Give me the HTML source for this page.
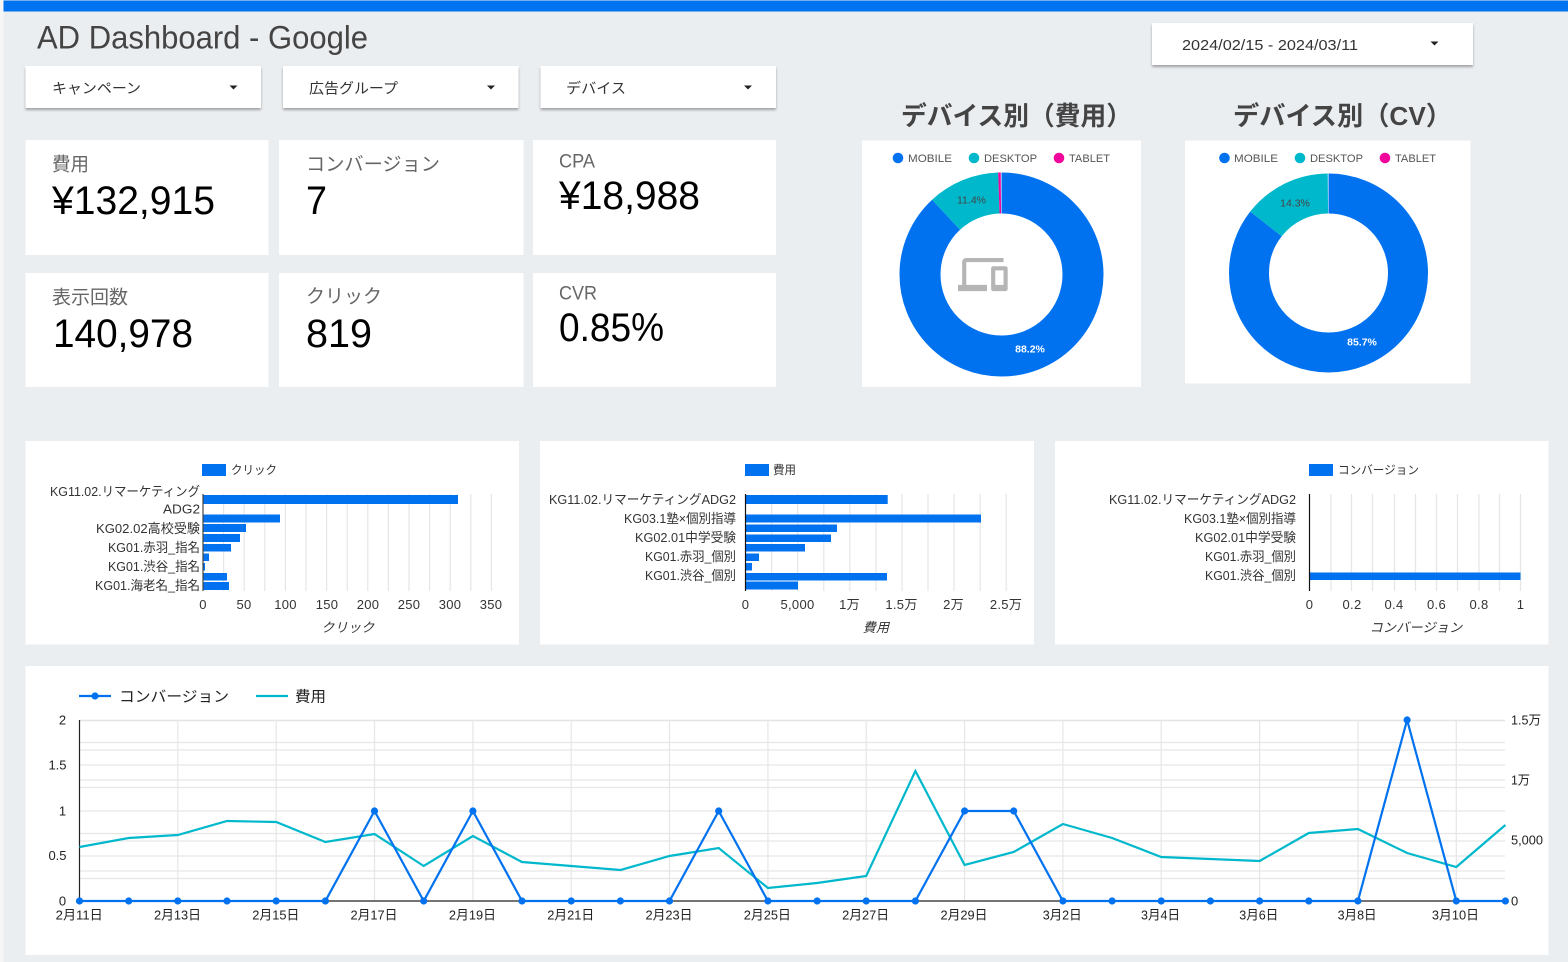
<!DOCTYPE html>
<html lang="ja"><head><meta charset="utf-8"><title>AD Dashboard - Google</title>
<style>
html,body{margin:0;padding:0;width:1568px;height:962px;overflow:hidden;background:#fff}
svg{display:block;position:absolute;left:0;top:0}
text{font-family:"Liberation Sans","Noto Sans CJK JP",sans-serif;dominant-baseline:central}
.a{font-size:13px;fill:#333;text-anchor:end}
.t{font-size:13px;fill:#333;text-anchor:middle;letter-spacing:.3px}
.l{font-size:13px;fill:#222;text-anchor:middle}
.k{font-size:19px;fill:#666}
.v{font-size:40px;fill:#000;dominant-baseline:auto}
.f{font-size:14.5px;fill:#333}
.g{font-size:11px;fill:#555}
.h{stroke:#e6e6e6;stroke-width:1.2;fill:none}
</style></head><body>
<svg width="1568" height="962" viewBox="0 0 1568 962" xmlns="http://www.w3.org/2000/svg">
<defs><filter id="s" x="-5%" y="-15%" width="110%" height="135%"><feDropShadow dx="0" dy="2" stdDeviation="1.4" flood-color="#000" flood-opacity=".32"/></filter></defs>
<rect width="1568" height="962" fill="#ebeef1"/>
<rect width="3.5" height="962" fill="#f6f6f6"/>
<rect x="3.5" y="0.5" width="1564.5" height="11" fill="#0073f0"/>
<text x="37" y="37.5" font-size="32" fill="#444" textLength="331" lengthAdjust="spacingAndGlyphs">AD Dashboard - Google</text>

<!-- filters -->
<g fill="#fff" filter="url(#s)"><rect x="25.5" y="66" width="235.5" height="42"/><rect x="283" y="66" width="235.5" height="42"/><rect x="540.5" y="66" width="235.5" height="42"/><rect x="1152" y="23" width="321" height="42"/></g>
<text class="f" x="52" y="89.5" textLength="89" lengthAdjust="spacingAndGlyphs">キャンペーン</text>
<text class="f" x="309" y="89.5" textLength="89" lengthAdjust="spacingAndGlyphs">広告グループ</text>
<text class="f" x="566" y="89.5" textLength="60" lengthAdjust="spacingAndGlyphs">デバイス</text>
<text class="f" x="1182" y="46" textLength="176" lengthAdjust="spacingAndGlyphs">2024/02/15 - 2024/03/11</text>
<g fill="#222"><path d="M229.5 85.5h8l-4 4z"/><path d="M487 85.5h8l-4 4z"/><path d="M744 85.5h8l-4 4z"/><path d="M1430.5 41.5h8l-4 4z"/></g>

<!-- KPI cards -->
<g fill="#fff"><rect x="25.5" y="140" width="243" height="115"/><rect x="279" y="140" width="244.5" height="115"/><rect x="533" y="140" width="243" height="115"/><rect x="25.5" y="273" width="243" height="114"/><rect x="279" y="273" width="244.5" height="114"/><rect x="533" y="273" width="243" height="114"/></g>
<text class="k" x="52" y="165" textLength="37" lengthAdjust="spacingAndGlyphs">費用</text>
<text class="k" x="306" y="165" textLength="134" lengthAdjust="spacingAndGlyphs">コンバージョン</text>
<text class="k" x="559" y="162" textLength="36" lengthAdjust="spacingAndGlyphs">CPA</text>
<text class="k" x="52" y="298" textLength="76" lengthAdjust="spacingAndGlyphs">表示回数</text>
<text class="k" x="306" y="297" textLength="76" lengthAdjust="spacingAndGlyphs">クリック</text>
<text class="k" x="559" y="294" textLength="38" lengthAdjust="spacingAndGlyphs">CVR</text>
<text class="v" x="52" y="214" textLength="163" lengthAdjust="spacingAndGlyphs">¥132,915</text>
<text class="v" x="306" y="214" textLength="21" lengthAdjust="spacingAndGlyphs">7</text>
<text class="v" x="559" y="209" textLength="141" lengthAdjust="spacingAndGlyphs">¥18,988</text>
<text class="v" x="53" y="347" textLength="140" lengthAdjust="spacingAndGlyphs">140,978</text>
<text class="v" x="306" y="347" textLength="66" lengthAdjust="spacingAndGlyphs">819</text>
<text class="v" x="559" y="341" textLength="105" lengthAdjust="spacingAndGlyphs">0.85%</text>

<!-- donuts -->
<text x="901" y="116" font-size="26" font-weight="700" fill="#444" textLength="231" lengthAdjust="spacingAndGlyphs">デバイス別（費用）</text>
<text x="1233" y="116" font-size="26" font-weight="700" fill="#444" textLength="219" lengthAdjust="spacingAndGlyphs">デバイス別（CV）</text>
<rect x="862" y="140.5" width="279" height="246.5" fill="#fff"/>
<rect x="1185" y="140.5" width="285.5" height="243" fill="#fff"/>
<g transform="rotate(-90 1001.5 274.5)" fill="none" stroke-width="41">
<circle cx="1001.5" cy="274.5" r="81.5" stroke="#0072f0" pathLength="100" stroke-dasharray="88.2 100"/>
<circle cx="1001.5" cy="274.5" r="81.5" stroke="#00b8cc" pathLength="100" stroke-dasharray="11.4 100" stroke-dashoffset="-88.2"/>
<circle cx="1001.5" cy="274.5" r="81.5" stroke="#f0069b" pathLength="100" stroke-dasharray="0.4 100" stroke-dashoffset="-99.6"/>
</g>
<g transform="rotate(-90 1328.5 273)" fill="none" stroke-width="40">
<circle cx="1328.5" cy="273" r="79.5" stroke="#0072f0" pathLength="100" stroke-dasharray="85.7 100"/>
<circle cx="1328.5" cy="273" r="79.5" stroke="#00b8cc" pathLength="100" stroke-dasharray="14.3 100" stroke-dashoffset="-85.7"/>
</g>
<path transform="translate(958 249.7) scale(2.07)" fill="#b5b5b5" d="M4 6h18V4H4c-1.1 0-2 .9-2 2v11H0v3h14v-3H4V6zm19 2h-6c-.55 0-1 .45-1 1v10c0 .55.45 1 1 1h6c.55 0 1-.45 1-1V9c0-.55-.45-1-1-1zm-1 9h-4v-7h4v7z"/>
<text x="971.5" y="200.5" fill="#444" font-size="10.5" text-anchor="middle">11.4%</text>
<text x="1030" y="349.5" fill="#fff" font-size="10.5" font-weight="700" text-anchor="middle">88.2%</text>
<text x="1295" y="203.5" fill="#444" font-size="10.5" text-anchor="middle">14.3%</text>
<text x="1362" y="342.5" fill="#fff" font-size="10.5" font-weight="700" text-anchor="middle">85.7%</text>
<circle cx="898" cy="158" r="5.3" fill="#0072f0"/><circle cx="974" cy="158" r="5.3" fill="#00b8cc"/><circle cx="1059" cy="158" r="5.3" fill="#f0069b"/>
<circle cx="1224.5" cy="158" r="5.3" fill="#0072f0"/><circle cx="1300" cy="158" r="5.3" fill="#00b8cc"/><circle cx="1385" cy="158" r="5.3" fill="#f0069b"/>
<text class="g" x="908" y="159" textLength="44" lengthAdjust="spacingAndGlyphs">MOBILE</text>
<text class="g" x="984" y="159" textLength="53" lengthAdjust="spacingAndGlyphs">DESKTOP</text>
<text class="g" x="1069" y="159" textLength="41" lengthAdjust="spacingAndGlyphs">TABLET</text>
<text class="g" x="1234" y="159" textLength="44" lengthAdjust="spacingAndGlyphs">MOBILE</text>
<text class="g" x="1310" y="159" textLength="53" lengthAdjust="spacingAndGlyphs">DESKTOP</text>
<text class="g" x="1395" y="159" textLength="41" lengthAdjust="spacingAndGlyphs">TABLET</text>

<!-- bar panels -->
<g fill="#fff"><rect x="25.5" y="441" width="493.5" height="203.5"/><rect x="540" y="441" width="494" height="203.5"/><rect x="1055" y="441" width="493.5" height="203.5"/></g>

<!-- chart 1 -->
<path class="h" d="M223.6 494V591M244.2 494V591M264.8 494V591M285.4 494V591M306 494V591M326.6 494V591M347.2 494V591M367.8 494V591M388.4 494V591M409 494V591M429.6 494V591M450.2 494V591M470.8 494V591M491.4 494V591"/>
<g fill="#0072f0"><rect x="203" y="495" width="255" height="9"/><rect x="203" y="514.5" width="77" height="8"/><rect x="203" y="524" width="43" height="8"/><rect x="203" y="534" width="37" height="8"/><rect x="203" y="544" width="28" height="7.5"/><rect x="203" y="553.5" width="6" height="7.5"/><rect x="203" y="563" width="2" height="7.5"/><rect x="203" y="573" width="24" height="7.5"/><rect x="203" y="582" width="26" height="8"/></g>
<path d="M203 494V591" stroke="#444" stroke-width="1.2"/>
<rect x="202" y="464" width="24" height="12" fill="#0072f0"/>
<text x="231" y="470" font-size="12" fill="#333" textLength="46" lengthAdjust="spacingAndGlyphs">クリック</text>
<text class="a" x="200" y="491.5" textLength="150" lengthAdjust="spacingAndGlyphs">KG11.02.リマーケティング</text>
<text class="a" x="200" y="509" textLength="37" lengthAdjust="spacingAndGlyphs">ADG2</text>
<text class="a" x="200" y="528.5" textLength="104" lengthAdjust="spacingAndGlyphs">KG02.02高校受験</text>
<text class="a" x="200" y="547.5" textLength="92" lengthAdjust="spacingAndGlyphs">KG01.赤羽_指名</text>
<text class="a" x="200" y="566.5" textLength="92" lengthAdjust="spacingAndGlyphs">KG01.渋谷_指名</text>
<text class="a" x="200" y="585.5" textLength="105" lengthAdjust="spacingAndGlyphs">KG01.海老名_指名</text>
<text class="t" x="203" y="604.5">0</text><text class="t" x="244" y="604.5">50</text><text class="t" x="285.5" y="604.5">100</text><text class="t" x="327" y="604.5">150</text><text class="t" x="368" y="604.5">200</text><text class="t" x="409" y="604.5">250</text><text class="t" x="450" y="604.5">300</text><text class="t" x="491" y="604.5">350</text>
<text class="t" x="348" y="627.5" font-style="italic">クリック</text>

<!-- chart 2 -->
<path class="h" d="M771.6 494V591M797.7 494V591M823.8 494V591M849.8 494V591M875.9 494V591M902 494V591M928 494V591M954.1 494V591M980.2 494V591M1006.2 494V591"/>
<g fill="#0072f0"><rect x="745.5" y="495" width="142.2" height="9"/><rect x="745.5" y="514.5" width="235.5" height="8"/><rect x="745.5" y="524.5" width="91.5" height="7.5"/><rect x="745.5" y="534.5" width="85.5" height="7.5"/><rect x="745.5" y="544" width="59.5" height="7.5"/><rect x="745.5" y="553.5" width="13.5" height="7.5"/><rect x="745.5" y="563" width="6.5" height="7.5"/><rect x="745.5" y="573" width="141.5" height="7.5"/><rect x="745.5" y="581.5" width="52.5" height="8"/></g>
<path d="M745.5 494V591" stroke="#111" stroke-width="1.2"/>
<rect x="745" y="464" width="24" height="12" fill="#0072f0"/>
<text x="773" y="470" font-size="12" fill="#333" textLength="23" lengthAdjust="spacingAndGlyphs">費用</text>
<text class="a" x="736" y="499.5" textLength="187" lengthAdjust="spacingAndGlyphs">KG11.02.リマーケティングADG2</text>
<text class="a" x="736" y="518.5" textLength="112" lengthAdjust="spacingAndGlyphs">KG03.1塾×個別指導</text>
<text class="a" x="736" y="537.5" textLength="101" lengthAdjust="spacingAndGlyphs">KG02.01中学受験</text>
<text class="a" x="736" y="556.5" textLength="91" lengthAdjust="spacingAndGlyphs">KG01.赤羽_個別</text>
<text class="a" x="736" y="575.5" textLength="91" lengthAdjust="spacingAndGlyphs">KG01.渋谷_個別</text>
<text class="t" x="745.5" y="604.5">0</text><text class="t" x="797.5" y="604.5">5,000</text><text class="t" x="849.5" y="604.5">1万</text><text class="t" x="901.5" y="604.5">1.5万</text><text class="t" x="953.5" y="604.5">2万</text><text class="t" x="1006" y="604.5">2.5万</text>
<text class="t" x="876" y="627.5" font-style="italic">費用</text>

<!-- chart 3 -->
<path class="h" d="M1331 494V591M1351.5 494V591M1372.5 494V591M1394.5 494V591M1415.5 494V591M1436.5 494V591M1457.5 494V591M1479 494V591M1499.5 494V591M1520.5 494V591"/>
<rect x="1309.5" y="572.5" width="211" height="7.5" fill="#0072f0"/>
<path d="M1309.5 494V591" stroke="#111" stroke-width="1.2"/>
<rect x="1309" y="464" width="24" height="12" fill="#0072f0"/>
<text x="1338" y="470" font-size="12" fill="#333" textLength="81" lengthAdjust="spacingAndGlyphs">コンバージョン</text>
<text class="a" x="1296" y="499.5" textLength="187" lengthAdjust="spacingAndGlyphs">KG11.02.リマーケティングADG2</text>
<text class="a" x="1296" y="518.5" textLength="112" lengthAdjust="spacingAndGlyphs">KG03.1塾×個別指導</text>
<text class="a" x="1296" y="537.5" textLength="101" lengthAdjust="spacingAndGlyphs">KG02.01中学受験</text>
<text class="a" x="1296" y="556.5" textLength="91" lengthAdjust="spacingAndGlyphs">KG01.赤羽_個別</text>
<text class="a" x="1296" y="575.5" textLength="91" lengthAdjust="spacingAndGlyphs">KG01.渋谷_個別</text>
<text class="t" x="1309.5" y="604.5">0</text><text class="t" x="1352" y="604.5">0.2</text><text class="t" x="1394" y="604.5">0.4</text><text class="t" x="1436.5" y="604.5">0.6</text><text class="t" x="1479" y="604.5">0.8</text><text class="t" x="1520.5" y="604.5">1</text>
<text class="t" x="1416" y="627.5" font-style="italic">コンバージョン</text>

<!-- line chart -->
<rect x="25.5" y="666" width="1523" height="289" fill="#fff"/>
<path d="M79 720.5H1505" stroke="#e4e4e4" stroke-width="1.6"/>
<path class="h" d="M79 742.5H1505M79 750H1505M79 765H1505M79 780H1505M79 787.5H1505M79 811H1505M79 833.5H1505M79 841H1505M79 856H1505M79 871H1505M79 878.5H1505"/>
<path class="h" d="M177.8 720V901M276.2 720V901M374.5 720V901M472.9 720V901M571.2 720V901M669.5 720V901M767.9 720V901M866.2 720V901M964.6 720V901M1062.9 720V901M1161.2 720V901M1259.6 720V901M1357.9 720V901M1456.3 720V901"/>
<path d="M79.5 720V901H1505" fill="none" stroke="#222" stroke-width="1.2"/>
<polyline fill="none" stroke="#00b8cc" stroke-width="2.2" points="79.5,847 128.7,838 177.8,835 227,821 276.2,822 325.4,842 374.5,834 423.7,866 472.9,836 522,862 571.2,866 620.4,870 669.5,856 718.7,848 767.9,888 817.1,883 866.2,876 915.4,771 964.6,865 1013.7,852 1062.9,824 1112.1,838 1161.2,857 1210.4,859 1259.6,861 1308.8,833 1357.9,829 1407.1,853 1456.3,867 1505.4,825"/>
<polyline fill="none" stroke="#0072f0" stroke-width="2.2" points="79.5,901 128.7,901 177.8,901 227,901 276.2,901 325.4,901 374.5,811 423.7,901 472.9,811 522,901 571.2,901 620.4,901 669.5,901 718.7,811 767.9,901 817.1,901 866.2,901 915.4,901 964.6,811 1013.7,811 1062.9,901 1112.1,901 1161.2,901 1210.4,901 1259.6,901 1308.8,901 1357.9,901 1407.1,720 1456.3,901 1505.4,901"/>
<g fill="#0072f0">
<circle cx="79.5" cy="901" r="3.6"/><circle cx="128.7" cy="901" r="3.6"/><circle cx="177.8" cy="901" r="3.6"/><circle cx="227" cy="901" r="3.6"/><circle cx="276.2" cy="901" r="3.6"/><circle cx="325.4" cy="901" r="3.6"/><circle cx="374.5" cy="811" r="3.6"/><circle cx="423.7" cy="901" r="3.6"/><circle cx="472.9" cy="811" r="3.6"/><circle cx="522" cy="901" r="3.6"/><circle cx="571.2" cy="901" r="3.6"/><circle cx="620.4" cy="901" r="3.6"/><circle cx="669.5" cy="901" r="3.6"/><circle cx="718.7" cy="811" r="3.6"/><circle cx="767.9" cy="901" r="3.6"/><circle cx="817.1" cy="901" r="3.6"/><circle cx="866.2" cy="901" r="3.6"/><circle cx="915.4" cy="901" r="3.6"/><circle cx="964.6" cy="811" r="3.6"/><circle cx="1013.7" cy="811" r="3.6"/><circle cx="1062.9" cy="901" r="3.6"/><circle cx="1112.1" cy="901" r="3.6"/><circle cx="1161.2" cy="901" r="3.6"/><circle cx="1210.4" cy="901" r="3.6"/><circle cx="1259.6" cy="901" r="3.6"/><circle cx="1308.8" cy="901" r="3.6"/><circle cx="1357.9" cy="901" r="3.6"/><circle cx="1407.1" cy="720" r="3.6"/><circle cx="1456.3" cy="901" r="3.6"/><circle cx="1505.4" cy="901" r="3.6"/>
</g>
<path d="M79 696H111" stroke="#0072f0" stroke-width="2.2"/><circle cx="95" cy="696" r="3.6" fill="#0072f0"/>
<path d="M256 696H288" stroke="#00b8cc" stroke-width="2.2"/>
<text x="119" y="697" font-size="15" fill="#222" textLength="110" lengthAdjust="spacingAndGlyphs">コンバージョン</text>
<text x="295" y="697" font-size="15" fill="#222" textLength="31" lengthAdjust="spacingAndGlyphs">費用</text>
<g>
<text class="l" x="62.5" y="720">2</text><text class="l" x="57.5" y="765">1.5</text><text class="l" x="62.5" y="811">1</text><text class="l" x="57.5" y="855.5">0.5</text><text class="l" x="62.5" y="901">0</text>
<text x="1511" y="720" font-size="13" fill="#222" textLength="30" lengthAdjust="spacingAndGlyphs">1.5万</text>
<text x="1511" y="780" font-size="13" fill="#222" textLength="19" lengthAdjust="spacingAndGlyphs">1万</text>
<text x="1511" y="840" font-size="13" fill="#222" textLength="32" lengthAdjust="spacingAndGlyphs">5,000</text>
<text x="1511" y="901" font-size="13" fill="#222">0</text>
<text class="l" x="79.2" y="915" textLength="47" lengthAdjust="spacingAndGlyphs">2月11日</text>
<text class="l" x="177.5" y="915" textLength="47" lengthAdjust="spacingAndGlyphs">2月13日</text>
<text class="l" x="275.8" y="915" textLength="47" lengthAdjust="spacingAndGlyphs">2月15日</text>
<text class="l" x="374" y="915" textLength="47" lengthAdjust="spacingAndGlyphs">2月17日</text>
<text class="l" x="472.4" y="915" textLength="47" lengthAdjust="spacingAndGlyphs">2月19日</text>
<text class="l" x="570.7" y="915" textLength="47" lengthAdjust="spacingAndGlyphs">2月21日</text>
<text class="l" x="669" y="915" textLength="47" lengthAdjust="spacingAndGlyphs">2月23日</text>
<text class="l" x="767.3" y="915" textLength="47" lengthAdjust="spacingAndGlyphs">2月25日</text>
<text class="l" x="865.6" y="915" textLength="47" lengthAdjust="spacingAndGlyphs">2月27日</text>
<text class="l" x="964" y="915" textLength="47" lengthAdjust="spacingAndGlyphs">2月29日</text>
<text class="l" x="1062.2" y="915" textLength="39" lengthAdjust="spacingAndGlyphs">3月2日</text>
<text class="l" x="1160.5" y="915" textLength="39" lengthAdjust="spacingAndGlyphs">3月4日</text>
<text class="l" x="1258.8" y="915" textLength="39" lengthAdjust="spacingAndGlyphs">3月6日</text>
<text class="l" x="1357.1" y="915" textLength="39" lengthAdjust="spacingAndGlyphs">3月8日</text>
<text class="l" x="1455.4" y="915" textLength="47" lengthAdjust="spacingAndGlyphs">3月10日</text>
</g>
</svg>
</body></html>
